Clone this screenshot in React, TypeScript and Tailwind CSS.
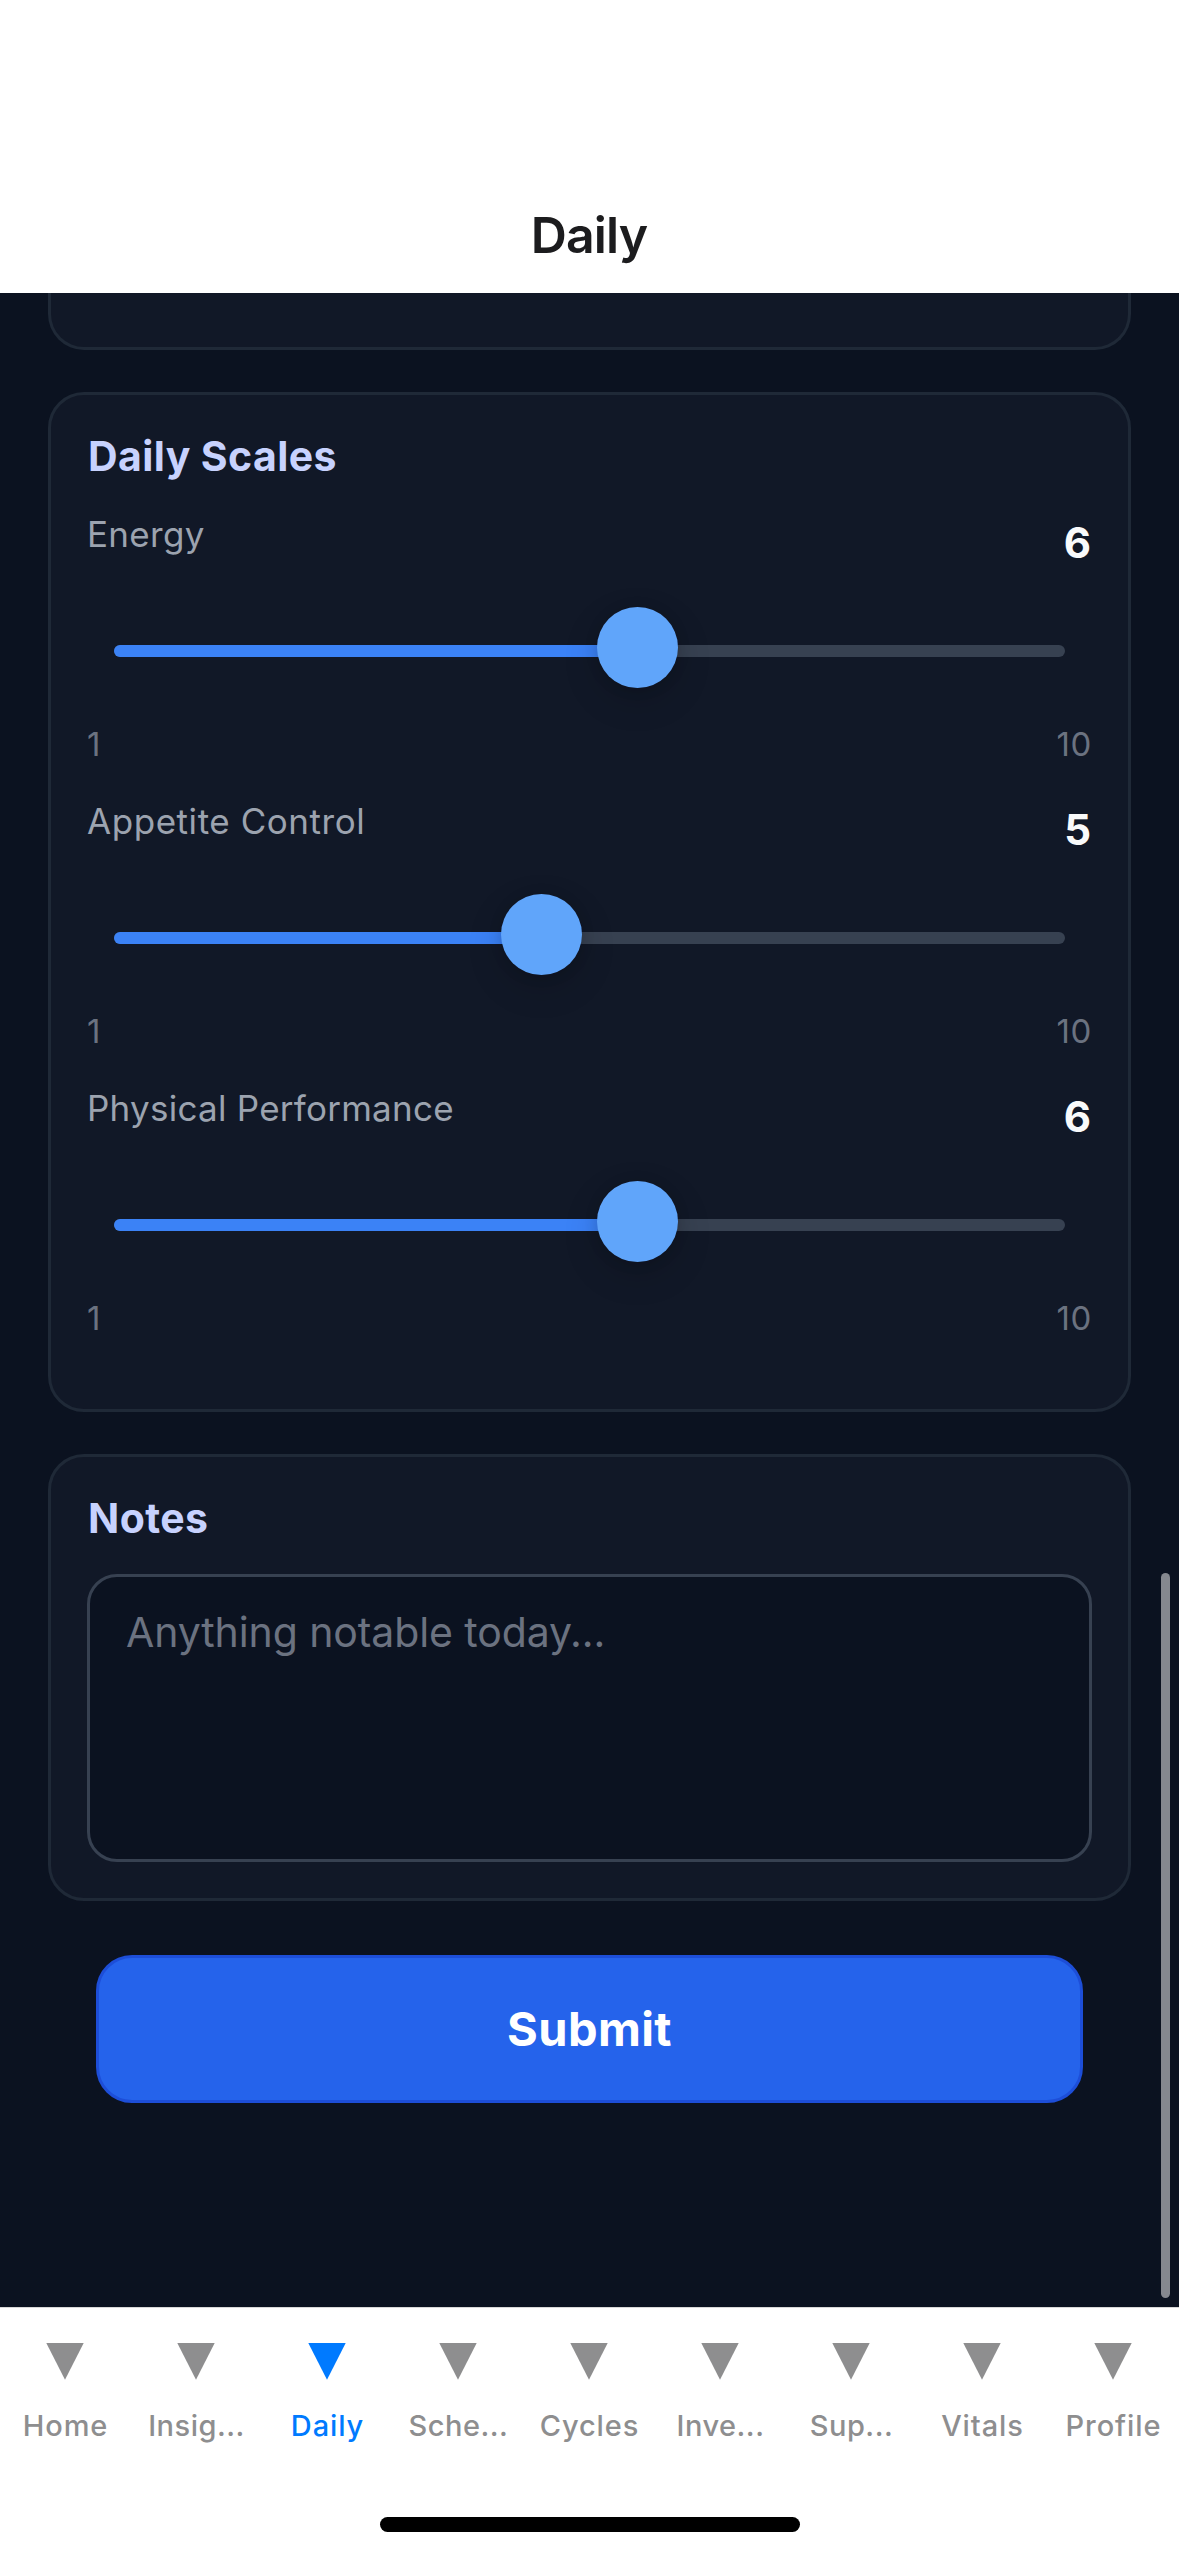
type Scale = { label: string; value: number };

const SCALES: Scale[] = [
  { label: "Energy", value: 6 },
  { label: "Appetite Control", value: 5 },
  { label: "Physical Performance", value: 6 },
];

const LABEL_TRACKING: Record<string, string> = {
  Energy: "tracking-[0.3px]",
  "Appetite Control": "tracking-[0.55px]",
  "Physical Performance": "tracking-[0.25px]",
};

const TABS = ["Home", "Insig...", "Daily", "Sche...", "Cycles", "Inve...", "Sup...", "Vitals", "Profile"];

const THUMB = 81;

function Slider({ value }: { value: number }) {
  const fraction = (value - 1) / 9;
  const left = `calc(${fraction * 100}% - ${fraction * THUMB}px)`;
  const fill = `calc(${fraction * 100}% + ${(0.5 - fraction) * THUMB}px)`;
  return (
    <div className="h-[152px] px-[27px] pt-[74px]">
      <div className="relative h-3 rounded-full bg-[#374151]">
        <div className="h-3 rounded-l-full bg-[#3b82f6]" style={{ width: fill }} />
        <div
          className="absolute -top-[38px] size-[81px] rounded-full bg-[#60a5fa] shadow-[0_12px_36px_rgba(0,0,0,0.16),0_1px_14px_rgba(0,0,0,0.12)]"
          style={{ left }}
        />
      </div>
    </div>
  );
}

function ScaleRow({ label, value }: Scale) {
  return (
    <div className="h-[287px]">
      <div className="flex h-[58px] items-start justify-between">
        <span className={`text-[35px] leading-[42px] text-[#9ca3af] ${LABEL_TRACKING[label]}`}>{label}</span>
        <span className="mt-[5px] mr-px text-[42px] leading-[50px] font-bold text-[#f9fafb]">{value}</span>
      </div>
      <Slider value={value} />
      <div className="mt-px flex justify-between text-[33px] leading-[40px] text-[#6b7280]">
        <span>1</span>
        <span className="tracking-[0.6px]">10</span>
      </div>
    </div>
  );
}

function CardTitle({ children }: { children: string }) {
  return <h2 className="pl-px text-[41px] leading-[50px] font-bold tracking-[0.4px] text-[#c7d2fe]">{children}</h2>;
}

function Tab({ name, active }: { name: string; active: boolean }) {
  const spacing = name.endsWith("...") ? "tracking-[0.5px]" : "tracking-[0.9px]";
  return (
    <div className={`flex w-[131px] flex-col items-center pt-[35px] ${active ? "text-[#007aff]" : "text-[#8e8e8f]"}`}>
      <svg className="mr-[1.5px] h-[37px] w-[38px]" viewBox="0 0 38 37" fill="currentColor">
        <path d="M0.3 0H37.7L19 36.8Z" />
      </svg>
      <span className={`mt-7 text-[29px] leading-[36px] font-medium whitespace-nowrap ${spacing}`}>{name}</span>
    </div>
  );
}

export default function App() {
  return (
    <div className="flex h-[2556px] w-[1179px] flex-col overflow-hidden bg-white font-['Inter',sans-serif]">
      <header className="h-[293px] shrink-0 bg-white pt-[205px] pr-px text-center">
        <h1 className="text-[50px] leading-[60px] font-semibold tracking-[-0.9px] text-[#1c1c1e]">Daily</h1>
      </header>

      <main className="relative h-[2014px] shrink-0 bg-[#0b1220] px-12">
        <div className="h-[57px] rounded-b-[36px] border-[3px] border-t-0 border-[#1f2937] bg-[#111827]" />

        <section className="mt-[42px] h-[1020px] rounded-[36px] border-[3px] border-[#1f2937] bg-[#111827] p-9">
          <CardTitle>Daily Scales</CardTitle>
          <div className="mt-8">
            {SCALES.map((s) => (
              <ScaleRow key={s.label} {...s} />
            ))}
          </div>
        </section>

        <section className="mt-[42px] h-[447px] rounded-[36px] border-[3px] border-[#1f2937] bg-[#111827] p-9">
          <CardTitle>Notes</CardTitle>
          <textarea
            className="mt-[31px] block h-[288px] w-full resize-none rounded-[30px] border-[3px] border-[#374151] bg-[#0b1220] px-9 py-[30px] text-[41px] leading-[50px] tracking-[-0.1px] placeholder:text-[#6b7280]"
            placeholder="Anything notable today..."
          />
        </section>

        <button className="mx-12 mt-[54px] flex h-[148px] w-[987px] items-center justify-center rounded-[36px] border-[3px] border-[#1d4ed8] bg-[#2563eb] text-[47px] leading-[56px] font-bold tracking-[0.4px] text-white">
          Submit
        </button>

        <div className="absolute top-[1280px] right-[9px] h-[725px] w-[9px] rounded-full bg-[#85888f]" />
      </main>

      <nav className="flex flex-1 flex-col border-t border-[#d8d8d8] bg-white">
        <div className="flex">
          {TABS.map((t) => (
            <Tab key={t} name={t} active={t === "Daily"} />
          ))}
        </div>
        <div className="mx-auto mt-auto mb-6 h-[15px] w-[420px] rounded-full bg-black" />
      </nav>
    </div>
  );
}
